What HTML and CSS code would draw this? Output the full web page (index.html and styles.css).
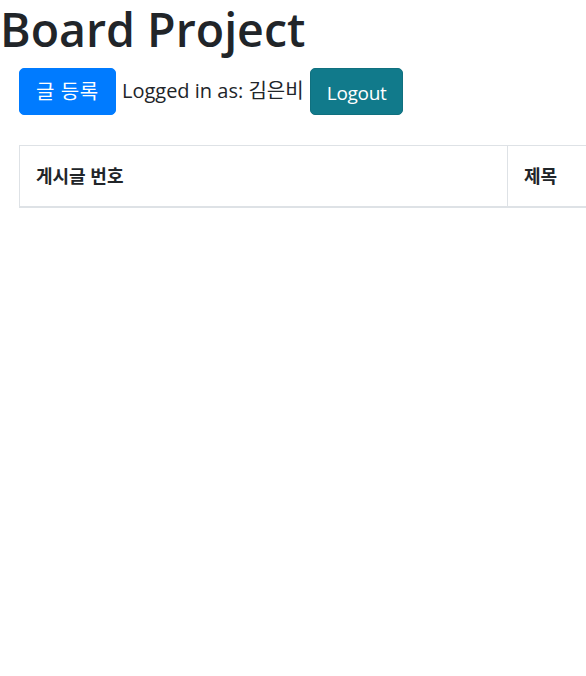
FILE: index.html
```html
<!DOCTYPE html>
<html lang="ko">
<head>
<meta charset="utf-8">
<title>Board Project</title>
<link rel="stylesheet" href="styles.css">
</head>
<body>
<h1 class="title">Board Project</h1>
<div class="toolbar">
  <a class="btn btn-primary" href="#">글 등록</a>
  <span class="user">Logged in as: 김은비</span>
  <button class="btn btn-info" type="button">Logout</button>
</div>
<div class="table-wrap">
  <table class="board">
    <thead>
      <tr>
        <th class="col-no">게시글 번호</th>
        <th class="col-title">제목</th>
      </tr>
    </thead>
  </table>
</div>
</body>
</html>
```
FILE: styles.css
```css
html, body {
  margin: 0;
  padding: 0;
  overflow-x: hidden;
  background: #fff;
}
body {
  font-family: "Open Sans", "Noto Sans CJK KR", sans-serif;
  color: #212529;
  font-size: 16px;
  line-height: 1.5;
}
.title {
  margin: 0 0 8px 0;
  padding-top: 2px;
  font-size: 46.5px;
  font-weight: 600;
  line-height: 1.2;
}
.toolbar {
  padding: 2px 19px 0 19px;
  white-space: nowrap;
}
.btn {
  display: inline-block;
  font-family: inherit;
  font-size: 20px;
  line-height: 29px;
  padding: 8px 16px;
  border: 1px solid transparent;
  border-radius: 5px;
  color: #fff;
  text-decoration: none;
  vertical-align: middle;
  cursor: pointer;
}
.btn-primary {
  background: #007bff;
  border-color: #007bff;
  letter-spacing: 0.6px;
}
.btn-info {
  background: #117a8b;
  border-color: #10707f;
  font-size: 19px;
  letter-spacing: -0.3px;
  padding-top: 10px;
  padding-bottom: 6px;
  margin-left: 2px;
}
.user {
  font-size: 20px;
  vertical-align: middle;
  margin-left: 2px;
}
.table-wrap {
  margin: 30px 0 0 19px;
}
.board {
  width: 700px;
  border-collapse: collapse;
}
.board th {
  text-align: left;
  font-size: 18px;
  font-weight: 700;
  line-height: 28px;
  padding: 16px;
  border: 1px solid #dee2e6;
  border-bottom: 2px solid #dee2e6;
}
.col-no {
  width: 455px;
}
```
